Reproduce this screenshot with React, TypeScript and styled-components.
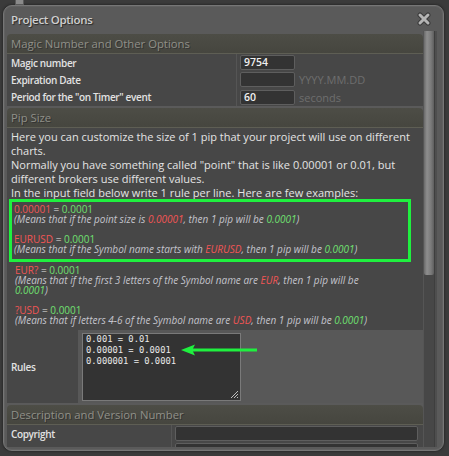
import React from "react";
import styled, { createGlobalStyle } from "styled-components";

const Global = createGlobalStyle`
  html, body { margin: 0; padding: 0; }
  body {
    background: #3b3b3b;
    width: 449px;
    height: 456px;
    overflow: hidden;
    font-family: "Open Sans", "DejaVu Sans", sans-serif;
  }
`;

const Page = styled.div`
  position: relative;
  width: 449px;
  height: 456px;
  padding: 5px 0 0 3px;
  box-sizing: border-box;
`;

const BackIcon = styled.div`
  position: absolute;
  left: 15px;
  top: 0;
  width: 7px;
  height: 4px;
  background: #8a8a8a;
  border: 1px solid #5a5a5a;
  border-top: none;
`;

const Dialog = styled.div`
  width: 441px;
  height: 446px;
  box-sizing: border-box;
  background: #5a5a5a;
  border: 1px solid #767676;
  border-radius: 9px;
  box-shadow: inset 0 0 0 1px #616161, 0 0 2px 1px #2c2c2c;
  display: flex;
  flex-direction: column;
  padding: 0 5px 3px 3px;
  overflow: hidden;
`;

const TitleBar = styled.div`
  height: 25px;
  display: flex;
  align-items: center;
  justify-content: space-between;
  padding: 0 7px 0 4px;
  flex: none;
`;

const Title = styled.div`
  font-size: 11.5px;
  font-weight: 600;
  letter-spacing: -0.3px;
  color: #cfcfcf;
  text-shadow: 1px 1px 1px #2a2a2a;
  margin-top: 1px;
`;

const CloseBtn = styled.div`
  width: 14px;
  height: 14px;
  display: flex;
  margin-top: 1px;
`;

const Body = styled.div`
  flex: 1;
  display: flex;
  min-height: 0;
`;

const Content = styled.div`
  width: 416px;
  padding-top: 3px;
  overflow: hidden;
  display: flex;
  flex-direction: column;
  gap: 2px;
`;

const Scrollbar = styled.div`
  width: 14px;
  background: #474747;
  border-left: 1px solid #555;
  box-sizing: border-box;
  position: relative;
  display: flex;
`;

const Thumb = styled.div`
  width: 10px;
  height: 244px;
  background: linear-gradient(to right, #6a6a6a, #8e8e8e 30%, #7a7a7a 70%, #5e5e5e);
  border-radius: 0 0 2px 2px;
`;

const Rail = styled.div`
  flex: 1;
  background: #4e4e4e;
  border-left: 1px solid #3e3e3e;
`;

const Section = styled.div`
  display: flex;
  flex-direction: column;
`;

const SectionHeader = styled.div`
  height: 19px;
  border-radius: 4px 4px 0 0;
  background: linear-gradient(#4d4d46, #46463f);
  border-bottom: 1px solid #5e5e54;
  color: #909088;
  font-size: 11.3px;
  line-height: 19px;
  padding-left: 4px;
  text-shadow: 1px 1px 0 #333;
  white-space: nowrap;
`;

const Row = styled.div<{ $labelWidth: number; $height: number }>`
  display: grid;
  grid-template-columns: ${(p) => p.$labelWidth}px 1fr;
  height: ${(p) => p.$height}px;
  background: #474747;
`;

const Label = styled.div`
  display: flex;
  align-items: center;
  padding-left: 4px;
  font-size: 10px;
  font-weight: 600;
  letter-spacing: -0.35px;
  color: #e2e2e2;
  white-space: nowrap;
`;

const ValueCell = styled.div<{ $pad?: string }>`
  display: flex;
  align-items: center;
  gap: 4px;
  padding: ${(p) => p.$pad || "0 0 0 3px"};
  border-left: 1px solid #555;
`;

const Input = styled.div<{ $width?: number }>`
  width: ${(p) => (p.$width ? `${p.$width}px` : "auto")};
  flex: ${(p) => (p.$width ? "none" : "1")};
  height: 15px;
  box-sizing: border-box;
  background: #333;
  border: 1px solid #5e5e5e;
  border-radius: 2px;
  color: #f0f0f0;
  font-size: 10.5px;
  font-weight: 600;
  line-height: 13px;
  padding-left: 3px;
`;

const Hint = styled.span`
  color: #6e6e6e;
  font-size: 11px;
`;

const PipBody = styled.div`
  background: #474747;
  padding-top: 2px;
  display: flex;
  flex-direction: column;
`;

const Para = styled.div`
  font-size: 11px;
  line-height: 14px;
  color: #e4e4e4;
  width: 405px;
  padding-left: 4px;
`;

const Examples = styled.div`
  padding: 0 0 5px 8px;
  font-size: 10px;
  line-height: 10px;
`;

const GreenBox = styled.div`
  margin: -1px 12px 3px -6px;
  border: 3px solid #1ff03f;
  padding: 2px 0 5px 2px;
`;

const Line = styled.div<{ $italic?: boolean }>`
  color: ${(p) => (p.$italic ? "#c4c4cc" : "#e4e4e4")};
  font-style: ${(p) => (p.$italic ? "italic" : "normal")};
  min-height: 10px;
  white-space: nowrap;
`;

const Red = styled.span`
  color: #f25555;
`;
const Green = styled.span`
  color: #70e070;
`;

const RulesRow = styled.div`
  display: grid;
  grid-template-columns: 71px 1fr;
  height: 73px;
  background: #474747;
`;

const RulesCell = styled.div`
  position: relative;
  background: #585858;
  padding: 3px 0 2px 4px;
`;

const TextArea = styled.div`
  position: relative;
  width: 159px;
  height: 68px;
  box-sizing: border-box;
  background: #333;
  border: 1px solid #7a7a7a;
  padding: 0 3px;
  font-family: "DejaVu Sans Mono", monospace;
  font-size: 8.8px;
  line-height: 11px;
  color: #eaeaea;
  white-space: pre;
`;

const Grip = styled.svg`
  position: absolute;
  right: 1px;
  bottom: 1px;
`;

const Arrow = styled.svg`
  position: absolute;
  left: 103px;
  top: 14px;
`;

const Cross = () => (
  <svg width="14" height="14" viewBox="0 0 14 14">
    <path d="M3 3 L11 11 M11 3 L3 11" stroke="#3a3a3a" strokeWidth="5" strokeLinecap="round" />
    <path d="M3 3 L11 11 M11 3 L3 11" stroke="#b4b4b4" strokeWidth="3" strokeLinecap="round" />
  </svg>
);

export default function App() {
  return (
    <>
      <Global />
      <Page>
        <BackIcon />
        <Dialog>
          <TitleBar>
            <Title>Project Options</Title>
            <CloseBtn>
              <Cross />
            </CloseBtn>
          </TitleBar>
          <Body>
            <Content>
              <Section>
                <SectionHeader>Magic Number and Other Options</SectionHeader>
                <Row $labelWidth={229} $height={17}>
                  <Label>Magic number</Label>
                  <ValueCell>
                    <Input $width={55}>9754</Input>
                  </ValueCell>
                </Row>
                <Row $labelWidth={229} $height={17}>
                  <Label>Expiration Date</Label>
                  <ValueCell>
                    <Input $width={55} />
                    <Hint>YYYY.MM.DD</Hint>
                  </ValueCell>
                </Row>
                <Row $labelWidth={229} $height={18}>
                  <Label>Period for the "on Timer" event</Label>
                  <ValueCell>
                    <Input $width={55}>60</Input>
                    <Hint>seconds</Hint>
                  </ValueCell>
                </Row>
              </Section>
              <Section>
                <SectionHeader>Pip Size</SectionHeader>
                <PipBody>
                  <Para>
                    Here you can customize the size of 1 pip that your project will use on different charts.
                    <br />
                    Normally you have something called "point" that is like 0.00001 or 0.01, but different brokers
                    use different values.
                    <br />
                    In the input field below write 1 rule per line. Here are few examples:
                  </Para>
                  <Examples>
                    <GreenBox>
                      <Line>
                        <Red>0.00001</Red> = <Green>0.0001</Green>
                      </Line>
                      <Line $italic>
                        (Means that if the point size is <Red>0.00001</Red>, then 1 pip will be <Green>0.0001</Green>)
                      </Line>
                      <Line />
                      <Line>
                        <Red>EURUSD</Red> = <Green>0.0001</Green>
                      </Line>
                      <Line $italic>
                        (Means that if the Symbol name starts with <Red>EURUSD</Red>, then 1 pip will be{" "}
                        <Green>0.0001</Green>)
                      </Line>
                    </GreenBox>
                    <Line>
                      <Red>EUR?</Red> = <Green>0.0001</Green>
                    </Line>
                    <Line $italic>
                      (Means that if the first 3 letters of the Symbol name are <Red>EUR</Red>, then 1 pip will be
                    </Line>
                    <Line $italic>
                      <Green>0.0001</Green>)
                    </Line>
                    <Line />
                    <Line>
                      <Red>?USD</Red> = <Green>0.0001</Green>
                    </Line>
                    <Line $italic>
                      (Means that if letters 4-6 of the Symbol name are <Red>USD</Red>, then 1 pip will be{" "}
                      <Green>0.0001</Green>)
                    </Line>
                  </Examples>
                  <RulesRow>
                    <Label>Rules</Label>
                    <RulesCell>
                      <TextArea>
                        {"0.001 = 0.01\n0.00001 = 0.0001\n0.000001 = 0.0001"}
                        <Grip width="10" height="10" viewBox="0 0 10 10">
                          <path d="M9 2 L2 9 M9 5 L5 9 M9 8 L8 9" stroke="#bdbdbd" strokeWidth="1" />
                        </Grip>
                      </TextArea>
                      <Arrow width="80" height="12" viewBox="0 0 80 12">
                        <path d="M0 6 L14 0.5 L12 4.5 L76 4.5 L76 7.5 L12 7.5 L14 11.5 Z" fill="#1ff03f" />
                      </Arrow>
                    </RulesCell>
                  </RulesRow>
                </PipBody>
              </Section>
              <Section>
                <SectionHeader>Description and Version Number</SectionHeader>
                <Row $labelWidth={164} $height={17}>
                  <Label>Copyright</Label>
                  <ValueCell $pad="0 5px 0 3px">
                    <Input />
                  </ValueCell>
                </Row>
                <Row $labelWidth={164} $height={17}>
                  <Label />
                  <ValueCell $pad="0 5px 0 3px">
                    <Input />
                  </ValueCell>
                </Row>
              </Section>
            </Content>
            <Scrollbar>
              <Thumb />
              <Rail />
            </Scrollbar>
          </Body>
        </Dialog>
      </Page>
    </>
  );
}
